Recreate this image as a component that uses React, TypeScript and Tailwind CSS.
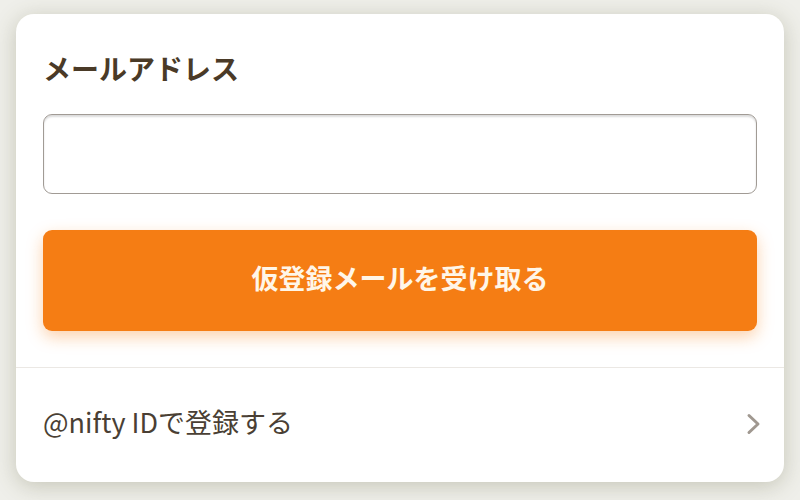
import React from "react";

export default function App() {
  return (
    <div
      className="w-[800px] h-[500px] bg-[#efefea] pt-[14px] pb-[18px] px-[16px]"
      style={{ fontFamily: '"Noto Sans CJK JP", "Noto Sans", sans-serif' }}
    >
      <div className="h-full bg-white rounded-[18px] shadow-[0_4px_22px_rgba(90,90,50,0.28)] flex flex-col">
        <div className="px-[27px] pt-[34px] pb-[36px] flex flex-col">
          <div className="text-[28px] leading-[40px] font-bold text-[#4a3a27]">メールアドレス</div>
          <input
            className="mt-[26px] h-[80px] w-full rounded-[9px] border-[1.5px] border-[#a19b95] shadow-[inset_0_2px_2px_rgba(0,0,0,0.14)] bg-white outline-none px-4 text-[24px]"
            type="email"
          />
          <button className="mt-[36px] h-[101px] w-full rounded-[9px] bg-[#f57d14] shadow-[0_6px_16px_rgba(245,125,20,0.35)] text-[#fff6e8] text-[27px] font-bold flex items-center justify-center pb-[5px]">
            仮登録メールを受け取る
          </button>
        </div>
        <div className="border-t border-[#ebe8e4] flex-1 flex items-center justify-between pl-[27px] pr-[22px] pb-[6px]">
          <span className="text-[27px] text-[#4a3f34]">@nifty IDで登録する</span>
          <svg width="16" height="22" viewBox="0 0 16 22" fill="none" className="mt-[4px]">
            <path d="M3 2.5 L12 11 L3 19.5" stroke="#a09890" strokeWidth="3" strokeLinecap="round" strokeLinejoin="round" />
          </svg>
        </div>
      </div>
    </div>
  );
}
